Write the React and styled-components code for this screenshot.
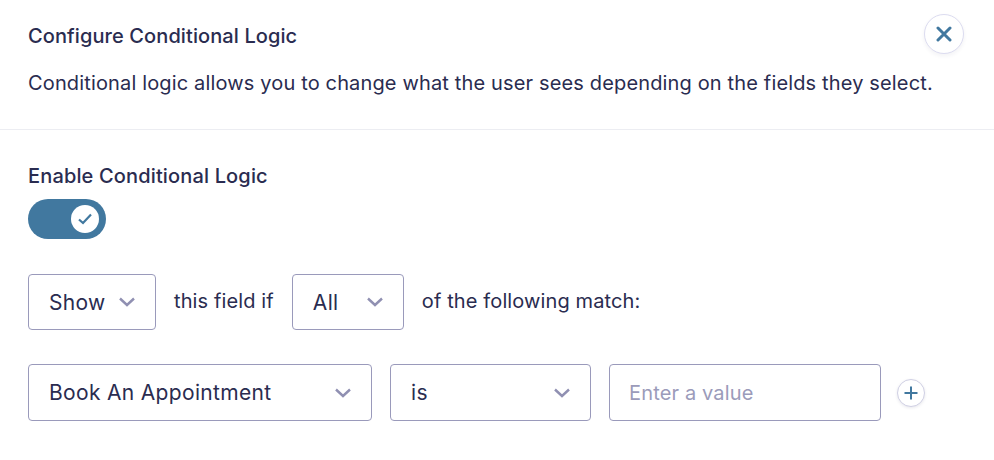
import React from "react";
import styled, { createGlobalStyle } from "styled-components";

const GlobalStyle = createGlobalStyle`
  html, body {
    margin: 0;
    padding: 0;
    background: #fff;
  }
  body {
    font-family: Inter, "Liberation Sans", sans-serif;
    color: #2a2c50;
  }
`;

const Modal = styled.div`
  width: 994px;
  height: 460px;
  overflow: hidden;
  background: #fff;
`;

const Header = styled.header`
  position: relative;
  height: 130px;
  padding: 25px 28px 0;
  box-sizing: border-box;
  border-bottom: 1px solid #ecedf2;
`;

const Title = styled.h2`
  margin: 0;
  font-size: 20px;
  line-height: 22px;
  font-weight: 500;
  letter-spacing: 0.1px;
`;

const Description = styled.p`
  margin: 23px 0 0;
  font-size: 20px;
  line-height: 26px;
  font-weight: 400;
  letter-spacing: 0.15px;
`;

const CloseButton = styled.button`
  position: absolute;
  top: 14px;
  right: 30px;
  width: 40px;
  height: 40px;
  padding: 0;
  display: flex;
  align-items: center;
  justify-content: center;
  background: #fff;
  border: 1px solid #dcdcf0;
  border-radius: 50%;
  box-shadow: 0 2px 4px rgba(40, 40, 90, 0.06);
`;

const Body = styled.section`
  padding: 35px 28px 0;
`;

const Label = styled.div`
  font-size: 20px;
  line-height: 22px;
  font-weight: 500;
  letter-spacing: 0.15px;
`;

const Toggle = styled.div`
  margin-top: 12px;
  width: 78px;
  height: 40px;
  border-radius: 20px;
  background: #41789f;
  display: flex;
  align-items: center;
  justify-content: flex-end;
  padding-right: 7px;
  box-sizing: border-box;
`;

const Knob = styled.span`
  width: 28px;
  height: 28px;
  border-radius: 50%;
  background: #fff;
  display: flex;
  align-items: center;
  justify-content: center;
`;

const Row = styled.div`
  display: flex;
  align-items: center;
  gap: 18px;
  margin-top: ${(p) => p.$top}px;
`;

const Select = styled.div`
  width: ${(p) => p.$width}px;
  height: ${(p) => p.$height}px;
  box-sizing: border-box;
  border: 1px solid #9a9abb;
  border-radius: 4px;
  padding: 0 19px 0 20px;
  display: flex;
  align-items: center;
  justify-content: space-between;
  font-size: 21px;
  letter-spacing: 0.33px;
  color: #2a2c50;
`;

const Text = styled.span`
  font-size: 20px;
  letter-spacing: 0.12px;
  position: relative;
  top: -1px;
`;

const ValueInput = styled.input`
  width: 272px;
  height: 57px;
  box-sizing: border-box;
  border: 1px solid #9a9abb;
  border-radius: 4px;
  padding: 0 19px;
  font-family: Inter, "Liberation Sans", sans-serif;
  font-size: 20px;
  letter-spacing: 0.15px;
  outline: none;
  &::placeholder {
    color: #9b9bba;
    opacity: 1;
  }
`;

const AddButton = styled.button`
  width: 28px;
  height: 28px;
  margin-left: -2px;
  padding: 0;
  display: flex;
  align-items: center;
  justify-content: center;
  background: #fff;
  border: 1px solid #d0d0e4;
  border-radius: 50%;
  box-shadow: 0 1px 3px rgba(40, 40, 90, 0.1);
`;

const Chevron = () => (
  <svg width="18" height="12" viewBox="0 0 18 12" fill="none">
    <path d="M2 2.5 L9 9 L16 2.5" stroke="#9090b2" strokeWidth="2.4" />
  </svg>
);

export default function App() {
  return (
    <Modal>
      <GlobalStyle />
      <Header>
        <Title>Configure Conditional Logic</Title>
        <Description>
          Conditional logic allows you to change what the user sees depending on the fields they select.
        </Description>
        <CloseButton aria-label="Close">
          <svg width="16" height="16" viewBox="0 0 16 16" fill="none">
            <path d="M2 2 L14 14 M14 2 L2 14" stroke="#41789f" strokeWidth="3" strokeLinecap="round" />
          </svg>
        </CloseButton>
      </Header>
      <Body>
        <Label>Enable Conditional Logic</Label>
        <Toggle>
          <Knob>
            <svg width="14" height="12" viewBox="0 0 14 12" fill="none">
              <path d="M1 6.5 L5 10 L13 1.5" stroke="#41789f" strokeWidth="2.2" />
            </svg>
          </Knob>
        </Toggle>
        <Row $top={35}>
          <Select $width={128} $height={56}>
            Show <Chevron />
          </Select>
          <Text>this field if</Text>
          <Select $width={112} $height={56}>
            All <Chevron />
          </Select>
          <Text>of the following match:</Text>
        </Row>
        <Row $top={34}>
          <Select $width={344} $height={57}>
            Book An Appointment <Chevron />
          </Select>
          <Select $width={201} $height={57}>
            is <Chevron />
          </Select>
          <ValueInput placeholder="Enter a value" />
          <AddButton aria-label="Add rule">
            <svg width="14" height="14" viewBox="0 0 14 14" fill="none">
              <path d="M7 0.5 V13.5 M0.5 7 H13.5" stroke="#41789f" strokeWidth="2" />
            </svg>
          </AddButton>
        </Row>
      </Body>
    </Modal>
  );
}
